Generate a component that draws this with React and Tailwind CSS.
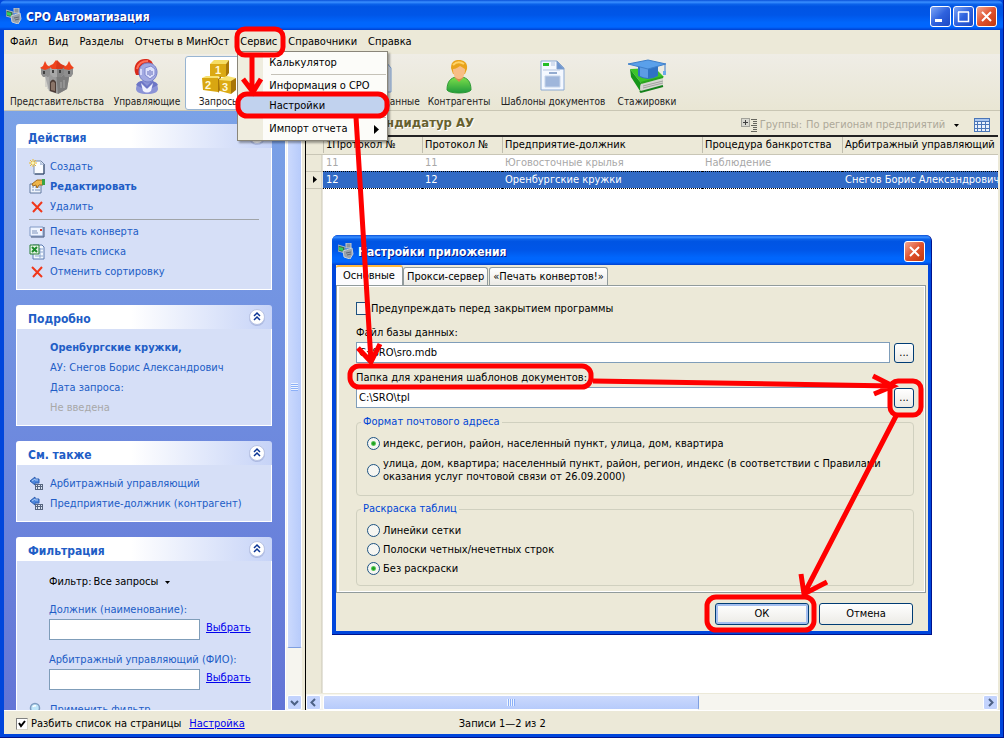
import React, { useState } from 'react';

/* ---------- Icons ---------- */

const AppIcon = () => (
    <svg width="16" height="16" viewBox="0 0 16 16" aria-hidden="true">
        <path d="M0 2l7 2v6L0 8z" fill="#3b6a52" stroke="#aab8c2" strokeWidth="1" />
        <path d="M1 4l4 1v3L1 7z" fill="#2fd05a" />
        <path d="M8 0h5v5H8z" fill="#8a949f" stroke="#c3cad1" strokeWidth="1" />
        <path d="M5 8l9-3 1 6-3 5-6-2z" fill="#9aa2ab" stroke="#c9d0d6" strokeWidth="1" />
        <path d="M8 10l5-1M9 12l4-1" stroke="#5f6872" strokeWidth="1" />
    </svg>
);

const CastleIcon = () => (
    <svg width="36" height="36" viewBox="0 0 36 36" aria-hidden="true">
        <path d="M5 13h26l-3 17-9 5-9-3z" fill="#9b9b9b" />
        <path d="M17 13h14l-3 17-9 5z" fill="#7c7c7c" />
        <path d="M2 9h9v7l-2 2H4l-2-3zM25 9h9v6l-2 3h-6l-1-2z" fill="#8f8f8f" />
        <path d="M11 8h14v7l-3 3h-8l-3-3z" fill="#a8a8a8" />
        <path d="M18 8h7v7l-3 3h-4z" fill="#858585" />
        <path d="M1 9l3-2 2-5 2 4 3 2v1l-5 2zM25 8l3-2 2-4 2 4 3 3-5 2-5-1zM10 7l4-2 3-4 4 4 5 2-3 3H13z" fill="#f0431c" />
        <path d="M18 1l4 4 4 2-3 3h-6z" fill="#d9381a" />
        <path d="M11 23q3-5 6 0v11l-6-2z" fill="#4c3b35" />
        <path d="M12 24q2-3 4 0v8l-4-1z" fill="#8a7468" />
        <path d="M5 12v3M14 11v3M21 11v3M30 12v3" stroke="#404040" strokeWidth="2" />
        <path d="M7 17v11M9 18v12" stroke="#bababa" strokeWidth="1" />
        <path d="M25 21v8M22 23v6" stroke="#a8a8a8" strokeWidth="1" />
    </svg>
);

const KnightIcon = () => (
    <svg width="28" height="36" viewBox="0 0 28 36" aria-hidden="true">
        <path d="M3 16C-1 8 4 0 12 0c5 0 7 2 8 5-7-1-12 2-13 11z" fill="#d92a1b" />
        <path d="M4 10C5 5 9 2 15 2" stroke="#ff6e58" strokeWidth="2" fill="none" />
        <path d="M3 30c0-6 5-9 11-9s11 3 11 9c0 3-4 5-11 5S3 33 3 30z" fill="#8b93d6" />
        <path d="M3 26q2-4 6-4l5 5 5-5q5 1 6 4l-6 3H9z" fill="#6d76c6" />
        <path d="M8 24l6 6 6-6-2 8q-4 3-8 0z" fill="#f1f2ff" />
        <path d="M6 13c0-6 4-9 9-9s9 4 9 9-4 10-9 10-9-4-9-10z" fill="#a2a9e2" stroke="#737dc7" />
        <path d="M12 9l6-2 4 3v6l-5 4-5-4z" fill="#dde0fb" stroke="#8088cd" />
        <path d="M15 12v4M17 11v6M19 12v4" stroke="#6068b8" strokeWidth="1" />
        <path d="M8 10v6" stroke="#d5d8f8" strokeWidth="2" />
    </svg>
);

const BlocksIcon = () => (
    <svg width="36" height="36" viewBox="0 0 36 36" aria-hidden="true">
        <path d="M9 5l4-4h15l-3 4z" fill="#f6dd63" />
        <path d="M9 5h16v13H9z" fill="#dba913" />
        <path d="M25 5l3-4v13l-3 4z" fill="#a87607" />
        <path d="M1 19l4-2h13l-1 3z" fill="#f8e16e" />
        <path d="M1 19h16v14L2 31z" fill="#d8a611" />
        <path d="M17 20l3-3v13l-3 4z" fill="#a87607" />
        <path d="M18 20l8-3 9 2-1 3-14 2z" fill="#f8e16e" />
        <path d="M18 21l12 1v13l-11-3z" fill="#dcaa14" />
        <path d="M30 22l5-3v12l-5 4z" fill="#a87607" />
        <g fill="#fff8d8" fontFamily="Liberation Sans, sans-serif" fontWeight="bold" fontSize="11">
            <text x="14" y="15">1</text>
            <text x="4" y="30">2</text>
            <text x="21" y="32">3</text>
        </g>
    </svg>
);

const DataIcon = () => (
    <svg width="20" height="36" viewBox="0 0 20 36" aria-hidden="true">
        <path d="M1 3h13l5 6v24H1z" fill="#dfe9f8" stroke="#7a9ccb" />
        <path d="M4 11h12M4 16h12M4 21h12" stroke="#90add6" strokeWidth="2" />
    </svg>
);

const PersonIcon = () => (
    <svg width="28" height="36" viewBox="0 0 28 36" aria-hidden="true">
        <defs>
            <linearGradient id="person-body" x1="0" y1="0" x2="0" y2="1">
                <stop offset="0" stopColor="#7fe04a" />
                <stop offset="1" stopColor="#1f9a3c" />
            </linearGradient>
        </defs>
        <path d="M2 31c0-9 4-12 9-13h6c5 1 9 4 9 13-2 4-22 4-24 0z" fill="url(#person-body)" stroke="#2d9a35" />
        <path d="M9 18l5 5 5-5z" fill="#d7894c" />
        <path d="M6 9C6 2 10 1 14 1s9 2 8 9l-2 5H8z" fill="#e9a31c" />
        <path d="M8 10c3 0 5-2 7-3 2 1 3 2 5 3 0 6-2 10-6 10s-6-4-6-10z" fill="#f8bd86" />
        <path d="M8 6q5-5 11-1" stroke="#ffd467" strokeWidth="2" fill="none" />
    </svg>
);

const TemplateIcon = () => (
    <svg width="28" height="36" viewBox="0 0 28 36" aria-hidden="true">
        <path d="M2 2h16l7 7v22H2z" fill="#f4f8ff" stroke="#8ba9d2" />
        <path d="M18 2v8h7z" fill="#6e95cf" stroke="#7f9fcd" />
        <path d="M4 4h6v3H4z" fill="#25bd26" />
        <path d="M12 4h4M12 6h4M4 11h17" stroke="#b3c4df" strokeWidth="1" />
        <path d="M10 14h8" stroke="#93abd0" strokeWidth="2" />
        <path d="M6 17h15v11H6z" fill="#9fb6db" stroke="#c5d4ea" />
    </svg>
);

const CapIcon = () => (
    <svg width="40" height="36" viewBox="0 0 40 36" aria-hidden="true">
        <path d="M3 10l11 14 23-6-9-9z" fill="#3cc528" />
        <path d="M3 10l11 14-1 8L4 18z" fill="#169619" />
        <path d="M14 25l22-6v8l-21 5q-3-3-1-7z" fill="#d6d6d2" />
        <path d="M16 27l20-5M16 29l20-5" stroke="#a2a29e" strokeWidth="1" />
        <path d="M13 32l1 1 22-6" stroke="#14801a" strokeWidth="2" fill="none" />
        <path d="M14 24l22-6" stroke="#2aa41f" strokeWidth="2" />
        <path d="M11 6v11q10 6 20 0V6z" fill="#2f72c4" />
        <path d="M13 8v9q4 2 8 2V8z" fill="#5d9ce4" />
        <path d="M1 5l20-4 18 4-18 5z" fill="#5aa0ea" stroke="#3e7fca" />
        <path d="M38 6v7" stroke="#3e7fca" strokeWidth="1" />
        <path d="M36 12h3v4h-3z" fill="#6ca9ea" />
    </svg>
);

const NewIcon = () => (
    <svg width="16" height="16" viewBox="0 0 16 16" aria-hidden="true">
        <path d="M5 2h7l3 3v10H5z" fill="#fafcff" stroke="#7388ab" />
        <path d="M15 5v10H6" stroke="#2d4263" strokeWidth="1" fill="none" />
        <path d="M11 2v4h4z" fill="#b9c8e0" />
        <path d="M4 0v8M0 4h8M1 1l6 6M7 1L1 7" stroke="#ecb92c" strokeWidth="1" />
        <circle cx="4" cy="4" r="1.5" fill="#fff6b0" />
    </svg>
);

const EditIcon = () => (
    <svg width="16" height="16" viewBox="0 0 16 16" aria-hidden="true">
        <path d="M1 5h11v9H1z" fill="#eef3fb" stroke="#60789f" />
        <path d="M3 8h2M6 8h5M3 11h2M6 11h5" stroke="#7490bb" strokeWidth="1" />
        <path d="M3 5l5-4h6v5h-4L8 9 7 6 4 7z" fill="#eeb54a" stroke="#a36a1d" strokeWidth="1" />
        <path d="M13 0h3v6h-3z" fill="#3aa344" />
    </svg>
);

const DeleteIcon = () => (
    <svg width="16" height="16" viewBox="0 0 16 16" aria-hidden="true">
        <path d="M3 3l10 10M13 3L4 13" stroke="#f0371b" strokeWidth="2" fill="none" />
    </svg>
);

const EnvelopeIcon = () => (
    <svg width="16" height="16" viewBox="0 0 16 16" aria-hidden="true">
        <path d="M1 3h13v9H1z" fill="#eef4ff" stroke="#8098c4" />
        <path d="M15 3v10H2" stroke="#3f5378" strokeWidth="1" fill="none" />
        <path d="M3 7h5M3 9h6" stroke="#7c92bb" strokeWidth="1" />
        <path d="M11 5h2v2h-2z" fill="#d93a22" />
    </svg>
);

const ExcelIcon = () => (
    <svg width="16" height="16" viewBox="0 0 16 16" aria-hidden="true">
        <path d="M4 1h9l2 2v12H4z" fill="#f2f7ff" stroke="#5d7bb0" />
        <path d="M9 5h5M9 8h5M6 12h8M11 4v10" stroke="#8fa8d0" strokeWidth="1" />
        <path d="M1 1h9v9H1z" fill="#eaf6ea" stroke="#277d33" />
        <path d="M3 3l5 5M8 3L3 8" stroke="#1d8b2b" strokeWidth="2" />
    </svg>
);

const LinkArrowIcon = () => (
    <svg width="16" height="16" viewBox="0 0 16 16" aria-hidden="true">
        <path d="M1 5l5-4v2h4v4H6v2z" fill="#4d86da" stroke="#2f5fb1" strokeWidth="1" />
        <path d="M3 5l3-2v1h3" stroke="#a9cbfa" strokeWidth="1" fill="none" />
        <path d="M6 8h8v6H6z" fill="#56657f" />
        <path d="M7 9h1v1H7zM9 9h2v1H9zM12 9h1v1h-1zM7 11h1v2H7zM9 11h2v2H9zM12 11h1v2h-1z" fill="#dfe7f4" />
    </svg>
);

const SearchIcon = () => (
    <svg width="16" height="16" viewBox="0 0 16 16" aria-hidden="true">
        <path d="M9 9l5 5" stroke="#e08a3a" strokeWidth="3" />
        <circle cx="6" cy="6" r="4.5" fill="#bfe6fa" stroke="#7f9cc0" strokeWidth="1.5" />
        <path d="M4 5q1-2 3-1" stroke="#fff" strokeWidth="1.5" fill="none" />
    </svg>
);

const GroupsIcon = () => (
    <svg width="17" height="15" viewBox="0 0 17 15" shapeRendering="crispEdges" aria-hidden="true">
        <path d="M0 0h9v9H0z" fill="#a2a29a" />
        <path d="M1 1h7v7H1z" fill="#d8d8d0" />
        <path d="M2 4h5v1H2zM4 2h1v5H4z" fill="#404040" />
        <path d="M10 1h6v1h-6zM12 3h4v1h-4zM12 5h4v1h-4zM10 7h6v1h-6zM12 9h4v1h-4zM12 11h4v1h-4zM10 13h6v1h-6z" fill="#66665e" />
    </svg>
);

const GridIcon = () => (
    <svg width="16" height="14" viewBox="0 0 16 14" shapeRendering="crispEdges" aria-hidden="true">
        <path d="M0 0h16v14H0z" fill="#4a76b8" />
        <path d="M1 1h14v2H1z" fill="#a9c6ef" />
        <path d="M1 4h2v2H1zM4 4h3v2H4zM8 4h3v2H8zM12 4h3v2h-3zM1 7h2v3H1zM4 7h3v3H4zM8 7h3v3H8zM12 7h3v3h-3zM1 11h2v2H1zM4 11h3v2H4zM8 11h3v2H8zM12 11h3v2h-3z" fill="#e9f1fc" />
    </svg>
);

const Caret = () => (
    <svg width="5" height="3" viewBox="0 0 5 3" aria-hidden="true">
        <path d="M0 0h5L2.5 3z" fill="#000" />
    </svg>
);

const CollapseIcon = () => (
    <svg width="18" height="18" viewBox="0 0 18 18" aria-hidden="true">
        <circle cx="9" cy="10" r="8" fill="#8d9ccb" opacity="0.5" />
        <circle cx="9" cy="9" r="7.5" fill="#fff" stroke="#b9c4e4" />
        <path d="M6 8l3-3 3 3M6 12l3-3 3 3" stroke="#0a3494" strokeWidth="1.5" fill="none" />
    </svg>
);

const Chevron = ({ d }) => (
    <svg width="9" height="9" viewBox="0 0 9 9" aria-hidden="true">
        <path d={d} stroke="#4d6185" strokeWidth="2" fill="none" />
    </svg>
);

/* ---------- Window chrome ---------- */

const captionBase = 'w-[21px] h-[21px] rounded-[3px] border border-white flex items-center justify-center';

const CaptionButton = ({ kind, label }) => (
    <button
        aria-label={label}
        className={
            kind === 'close'
                ? `${captionBase} bg-linear-to-br from-[#f0a58f] via-[#e0512c] to-[#c23708]`
                : `${captionBase} bg-linear-to-br from-[#7fa5f5] via-[#2f62de] to-[#1c49c4]`
        }
    >
        <svg width="13" height="13" viewBox="0 0 13 13" stroke="#fff" fill="none" aria-hidden="true">
            {kind === 'min' && <path d="M1 10.5h7" strokeWidth="3" />}
            {kind === 'max' && <path d="M1.5 2v9.5h10V2M1 2h11" strokeWidth="1.5" />}
            {kind === 'close' && <path d="M2 2l9 9M11 2l-9 9" strokeWidth="2" />}
        </svg>
    </button>
);

const TitleBar = ({ title, children }) => (
    <div className="h-[30px] shrink-0 flex items-center gap-1 pt-0.5 px-1.5 rounded-t-md bg-[linear-gradient(180deg,#0950d8_0%,#3a8fff_7%,#0b62ea_14%,#0054e3_22%,#0056e8_50%,#0066fc_75%,#0066ff_90%,#0040cf_100%)]">
        <AppIcon />
        <h1 className="flex-1 pt-0.5 text-[12px] leading-4 font-bold text-white [text-shadow:1px_1px_0_#0a1883]">{title}</h1>
        <div className="flex gap-0.5">{children}</div>
    </div>
);

/* ---------- Menu ---------- */

const menuItems = ['Файл', 'Вид', 'Разделы', 'Отчеты в МинЮст', 'Сервис', 'Справочники', 'Справка'];

const MenuRow = ({ children, active, arrow }) => (
    <button
        role="menuitem"
        className={`w-full h-5 pl-[30px] pr-[7px] flex items-center justify-between text-left ${active ? 'bg-[#c1d2ee]' : ''}`}
    >
        {children}
        {arrow && (
            <svg width="5" height="9" viewBox="0 0 5 9" aria-hidden="true">
                <path d="M0 0l5 4.5L0 9z" fill="#000" />
            </svg>
        )}
    </button>
);

const ServiceMenu = () => (
    <div
        role="menu"
        className="absolute left-px top-[19px] z-20 w-[151px] p-px border border-[#8a867a] shadow-[2px_2px_2px_rgba(0,0,0,0.35)] bg-[linear-gradient(to_right,#efeddf_25px,#fcfcf9_25px)]"
    >
        <MenuRow>Калькулятор</MenuRow>
        <div className="ml-8 my-px h-px bg-[#c5c2b8]" />
        <MenuRow>Информация о СРО</MenuRow>
        <MenuRow active>Настройки</MenuRow>
        <div className="ml-8 my-px h-px bg-[#c5c2b8]" />
        <MenuRow arrow>Импорт отчета</MenuRow>
    </div>
);

const MenuBar = () => (
    <nav className="h-6 shrink-0 flex items-center pl-0.5 gap-[3px] bg-[#ece9d8]">
        {menuItems.map((item) => (
            <div key={item} className="relative">
                <button className="h-5 px-1 whitespace-nowrap">{item}</button>
                {item === 'Сервис' && <ServiceMenu />}
            </div>
        ))}
    </nav>
);

/* ---------- Toolbar ---------- */

const sections = [
    { name: 'Представительства', icon: CastleIcon, width: 'w-[104px]' },
    { name: 'Управляющие', icon: KnightIcon, width: 'w-[76px]' },
    { name: 'Запросы', icon: BlocksIcon, width: 'w-[68px]', active: true },
    { name: 'Личные данные', icon: DataIcon, width: 'w-[86px] ml-[86px]' },
    { name: 'Контрагенты', icon: PersonIcon, width: 'w-[68px]' },
    { name: 'Шаблоны документов', icon: TemplateIcon, width: 'w-[120px]' },
    { name: 'Стажировки', icon: CapIcon, width: 'w-[68px]' },
];

const Toolbar = () => (
    <div className="h-[57px] shrink-0 flex items-start pt-0.5 pl-px bg-linear-to-b from-[#efede6] to-[#e9e6d4] border-b border-[#c9c6b4]">
        {sections.map(({ name, icon: Icon, width, active }) => (
            <button
                key={name}
                className={`${width} h-[54px] shrink-0 flex flex-col items-center pt-0.5 border rounded-[3px] text-[10px] leading-[14px] text-[#222] whitespace-nowrap ${
                    active ? 'border-[#98b5d2] bg-white' : 'border-transparent'
                }`}
            >
                <Icon />
                <span>{name}</span>
            </button>
        ))}
    </div>
);

/* ---------- Side panel ---------- */

const Card = ({ title, children }) => (
    <section>
        <header className="h-6 pl-3 pr-1.5 flex items-center justify-between rounded-t-[3px] bg-[linear-gradient(to_right,#fff_45%,#c6d3f7)]">
            <h2 className="pt-1 text-[12px] leading-4 font-bold text-[#215dc6]">{title}</h2>
            <button aria-label={`Свернуть: ${title}`}>
                <CollapseIcon />
            </button>
        </header>
        <div className="pt-[9px] pb-[7px] px-3 border border-t-0 border-white bg-[#d6dff7]">{children}</div>
    </section>
);

const TaskLink = ({ icon: Icon, children, bold }) => (
    <a href="#" className={`h-5 flex items-center gap-[5px] whitespace-nowrap text-[#215dc6] ${bold ? 'font-bold' : ''}`}>
        <Icon />
        {children}
    </a>
);

const FilterField = ({ id, label }) => (
    <div className="pl-5">
        <label htmlFor={id} className="h-[19px] flex items-center text-[#215dc6]">{label}</label>
        <div className="flex items-start gap-1.5">
            <input id={id} type="text" className="w-[151px] h-[21px] px-1 border border-[#7f9db9] bg-white" />
            <a href="#" className="pt-px text-[#0000ee] underline">Выбрать</a>
        </div>
    </div>
);

const Sidebar = () => (
    <aside className="w-[281px] shrink-0 overflow-hidden pl-3 pr-[13px] pt-[13px] flex flex-col gap-[15px] bg-linear-to-b from-[#7ba2e7] to-[#6375d6]">
        <Card title="Действия">
            <TaskLink icon={NewIcon}>Создать</TaskLink>
            <TaskLink icon={EditIcon} bold>Редактировать</TaskLink>
            <TaskLink icon={DeleteIcon}>Удалить</TaskLink>
            <hr className="my-0.5 border-[#a0a4a8]" />
            <TaskLink icon={EnvelopeIcon}>Печать конверта</TaskLink>
            <TaskLink icon={ExcelIcon}>Печать списка</TaskLink>
            <TaskLink icon={DeleteIcon}>Отменить сортировку</TaskLink>
        </Card>
        <Card title="Подробно">
            <div className="pl-[21px] leading-5 text-[#215dc6] whitespace-nowrap">
                <p className="font-bold">Оренбургские кружки,</p>
                <p>АУ: Снегов Борис Александрович</p>
                <p>Дата запроса:</p>
                <p className="text-[#a8a8a8]">Не введена</p>
            </div>
        </Card>
        <Card title="См. также">
            <TaskLink icon={LinkArrowIcon}>Арбитражный управляющий</TaskLink>
            <TaskLink icon={LinkArrowIcon}>Предприятие-должник (контрагент)</TaskLink>
        </Card>
        <Card title="Фильтрация">
            <div className="pl-5 pt-0.5 h-[30px] flex items-start">
                <label htmlFor="filter" className="leading-5 pr-0.5">Фильтр:</label>
                <select id="filter" className="h-5 appearance-none bg-transparent">
                    <option>Все запросы</option>
                </select>
                <span className="h-5 pl-1.5 flex items-center"><Caret /></span>
            </div>
            <div className="flex flex-col gap-2.5">
                <FilterField id="debtor" label="Должник (наименование):" />
                <FilterField id="manager" label="Арбитражный управляющий (ФИО):" />
                <TaskLink icon={SearchIcon}>Применить фильтр</TaskLink>
            </div>
        </Card>
    </aside>
);

const scrollButton = 'w-[15px] h-[15px] shrink-0 flex items-center justify-center rounded-[2px] border border-white bg-[#c3d3fd]';

const VerticalScroll = () => (
    <div className="w-[17px] shrink-0 flex flex-col items-center border-l border-white bg-[#f6f5ef]">
        <button aria-label="Вверх" className={scrollButton}><Chevron d="M1 6l3.5-3.5L8 6" /></button>
        <div className="w-[15px] grow-[11] flex items-center justify-center rounded-[2px] border border-white border-b-[#7f9fe0] bg-linear-to-r from-[#cbd9fd] to-[#b7cbfb]">
            <div className="w-[7px] h-2 bg-[repeating-linear-gradient(to_bottom,#eef4fe_0_1px,#8cb0f8_1px_2px)]" />
        </div>
        <div className="grow" />
        <button aria-label="Вниз" className={scrollButton}><Chevron d="M1 3l3.5 3.5L8 3" /></button>
    </div>
);

const HorizontalScroll = () => (
    <div className="h-[17px] shrink-0 flex items-center border-t border-[#ece9d8] bg-[#f6f5ef]">
        <button aria-label="Влево" className={scrollButton}><Chevron d="M6 1L2.5 4.5 6 8" /></button>
        <div className="h-[15px] w-[376px] ml-0.5 flex items-center justify-center rounded-[2px] border border-white border-r-[#7f9fe0] bg-linear-to-b from-[#cbd9fd] to-[#b7cbfb]">
            <div className="w-2 h-[7px] bg-[repeating-linear-gradient(to_right,#eef4fe_0_1px,#8cb0f8_1px_2px)]" />
        </div>
        <div className="grow" />
        <button aria-label="Вправо" className={scrollButton}><Chevron d="M3 1l3.5 3.5L3 8" /></button>
    </div>
);

/* ---------- Records ---------- */

const columns = ['1Протокол №', 'Протокол №', 'Предприятие-должник', 'Процедура банкротства', 'Арбитражный управляющий'];

const rows = [
    { cells: ['11', '11', 'Юговосточные крылья', 'Наблюдение', ''] },
    { cells: ['12', '12', 'Оренбургские кружки', '', 'Снегов Борис Александрович'], selected: true },
];

const Records = () => (
    <main className="flex-1 min-w-0 mr-0.5 flex flex-col border-l border-black">
        <div className="h-6 shrink-0 pl-0.5 pr-2 flex items-center bg-[#ece9d8]">
            <h2 className="flex-1 text-[13px] leading-4 font-bold text-[#66602e] [text-shadow:1px_1px_0_#fff]">Запросы кандидатур АУ</h2>
            <div className="pt-1 flex items-center">
                <GroupsIcon />
                <label htmlFor="groups" className="pl-0.5 pr-1 text-[#aca899]">Группы:</label>
                <select id="groups" disabled className="appearance-none bg-transparent text-[#aca899] opacity-100">
                    <option>По регионам предприятий</option>
                </select>
                <span className="pl-2 pr-[15px]"><Caret /></span>
                <button aria-label="Столбцы"><GridIcon /></button>
            </div>
        </div>
        <div className="flex-1 min-h-0 overflow-hidden border-t-2 border-[#222] bg-[linear-gradient(to_right,#ece9d8_15px,#c9c6b6_16px,#fff_17px)]">
            <table className="w-full table-fixed border-collapse">
                <colgroup>
                    <col className="w-[17px]" />
                    <col className="w-[99px]" />
                    <col className="w-20" />
                    <col className="w-[200px]" />
                    <col className="w-[140px]" />
                    <col />
                </colgroup>
                <thead>
                    <tr className="h-[17px] bg-[#ece9d8] border-b border-[#c9c6b6]">
                        <th aria-label="Текущая запись"></th>
                        {columns.map((name) => (
                            <th key={name} className="p-0 text-left font-normal leading-4 whitespace-nowrap">
                                <span className="block pl-0.5 border-l border-[#c0bdae]">{name}</span>
                            </th>
                        ))}
                    </tr>
                </thead>
                <tbody>
                    {rows.map(({ cells, selected }) => (
                        <tr key={cells[0]} className="h-[17px]">
                            <td className="p-0 border-b border-[#c9c6b6]">
                                {selected && (
                                    <svg width="5" height="7" viewBox="0 0 5 7" className="ml-[7px]" aria-label="Текущая запись">
                                        <path d="M0 0l4 3.5L0 7z" fill="#000" />
                                    </svg>
                                )}
                            </td>
                            {cells.map((cell, i) => (
                                <td
                                    key={i}
                                    className={`p-0 pl-[3px] leading-4 whitespace-nowrap ${
                                        selected ? 'bg-[#316ac5] text-white border-y border-dotted border-black' : 'text-[#a8a8a8]'
                                    }`}
                                >
                                    {cell}
                                </td>
                            ))}
                        </tr>
                    ))}
                </tbody>
            </table>
        </div>
        <HorizontalScroll />
    </main>
);

const StatusBar = () => (
    <footer className="h-6 shrink-0 flex items-center pl-3 pt-[3px] border-t border-white bg-[#ece9d8]">
        <label className="flex items-center gap-[3px]">
            <span className="relative w-3 h-3">
                <input type="checkbox" defaultChecked className="peer block w-3 h-3 appearance-none bg-white border border-[#808080] border-r-[#d8d5c8] border-b-[#d8d5c8]" />
                <svg className="absolute left-0 top-0 hidden peer-checked:block pointer-events-none" width="12" height="12" viewBox="0 0 12 12" aria-hidden="true">
                    <path d="M3 5l2 3 4-5" stroke="#000" strokeWidth="2" fill="none" />
                </svg>
            </span>
            Разбить список на страницы
        </label>
        <a href="#" className="ml-2 text-[#0000ee] underline">Настройка</a>
        <span className="ml-[214px]">Записи 1—2 из 2</span>
    </footer>
);

/* ---------- Settings dialog ---------- */

const tabs = ['Основные', 'Прокси-сервер', '«Печать конвертов!»'];

const PathField = ({ id, label, value }) => (
    <div>
        <label htmlFor={id} className="block leading-[19px]">{label}</label>
        <div className="flex items-center gap-1">
            <input id={id} type="text" defaultValue={value} className="flex-1 min-w-0 h-[21px] px-0.5 border border-[#7f9db9] bg-white" />
            <button aria-label="Обзор" className="w-5 h-5 rounded-[3px] border border-[#003c74] bg-linear-to-b from-white to-[#ecebe6] leading-4">...</button>
        </div>
    </div>
);

const Radio = ({ name, value, selected, onChange, children }) => (
    <label className="flex items-center gap-[3px] leading-[13px]">
        <input
            type="radio"
            name={name}
            checked={selected === value}
            onChange={() => onChange(value)}
            className="w-[13px] h-[13px] shrink-0 appearance-none rounded-full border border-[#1d5281] bg-[#f6f6f2] checked:bg-[radial-gradient(circle,#21a121_0_1px,#5cc75c_2px,#f6f6f2_3px)]"
        />
        <span>{children}</span>
    </label>
);

const group = 'rounded border border-[#d0d0bf] pl-2.5';

const SettingsDialog = () => {
    const [format, setFormat] = useState('index');
    const [paint, setPaint] = useState('none');

    return (
        <div
            role="dialog"
            aria-label="Настройки приложения"
            className="absolute left-[332px] top-[235px] z-10 w-[600px] rounded-t-md bg-[#0046dc] border-r border-b border-[#00138c]"
        >
            <TitleBar title="Настройки приложения">
                <CaptionButton kind="close" label="Закрыть" />
            </TitleBar>
            <div className="ml-1 mr-[3px] mb-[3px] bg-[#ece9d8]">
                <div role="tablist" className="h-5 flex items-end">
                    {tabs.map((tab, i) => (
                        <button
                            key={tab}
                            role="tab"
                            aria-selected={i === 0}
                            className={
                                i === 0
                                    ? 'h-5 px-[7px] border-t-2 border-[#ffb83c] border-r border-r-[#919b9c] rounded-t-[3px] bg-[#fcfcfe]'
                                    : 'h-[18px] px-[3px] mr-px border border-b-0 border-[#919b9c] rounded-t-[3px] bg-linear-to-b from-white to-[#ecebe6]'
                            }
                        >
                            {tab}
                        </button>
                    ))}
                </div>
                <div className="mr-0.5 pl-[19px] pr-[11px] pt-4 pb-1.5 border border-[#919b9c] shadow-[inset_2px_0_0_#fff,inset_-1px_-1px_0_#fff,inset_0_1px_0_#fff]">
                    <label className="flex items-center gap-0.5 h-[13px]">
                        <input type="checkbox" className="w-[13px] h-[13px] appearance-none border border-[#1d5281] bg-[#f4f4f0] checked:bg-[#21a121]" />
                        Предупреждать перед закрытием программы
                    </label>
                    <div className="pt-2 flex flex-col gap-[5px]">
                        <PathField id="db" label="Файл базы данных:" value="C:\SRO\sro.mdb" />
                        <PathField id="tpl" label="Папка для хранения шаблонов документов:" value="C:\SRO\tpl" />
                    </div>
                    <fieldset className={`${group} mt-[7px] pb-3`}>
                        <legend className="-ml-1.5 px-0.5 leading-[14px] text-[#0046d5]">Формат почтового адреса</legend>
                        <div className="pt-2 flex flex-col gap-[7px]">
                            <Radio name="format" value="index" selected={format} onChange={setFormat}>
                                индекс, регион, район, населенный пункт, улица, дом, квартира
                            </Radio>
                            <Radio name="format" value="street" selected={format} onChange={setFormat}>
                                улица, дом, квартира; населенный пункт, район, регион, индекс (в соответствии с Правилами
                                <br />
                                оказания услуг почтовой связи от 26.09.2000)
                            </Radio>
                        </div>
                    </fieldset>
                    <fieldset className={`${group} mt-1.5 pb-2.5`}>
                        <legend className="-ml-1.5 px-0.5 leading-[14px] text-[#0046d5]">Раскраска таблиц</legend>
                        <div className="pt-2 flex flex-col gap-1.5">
                            <Radio name="paint" value="grid" selected={paint} onChange={setPaint}>Линейки сетки</Radio>
                            <Radio name="paint" value="stripes" selected={paint} onChange={setPaint}>Полоски четных/нечетных строк</Radio>
                            <Radio name="paint" value="none" selected={paint} onChange={setPaint}>Без раскраски</Radio>
                        </div>
                    </fieldset>
                </div>
                <div className="pt-2.5 pb-1.5 pr-[15px] flex justify-end gap-2.5">
                    <button className="w-[94px] h-[22px] rounded-[3px] border border-[#003c74] bg-linear-to-b from-white to-[#ecebe6] shadow-[inset_0_0_0_2px_#a5bff0]">ОК</button>
                    <button className="w-[94px] h-[22px] rounded-[3px] border border-[#003c74] bg-linear-to-b from-white to-[#ecebe6]">Отмена</button>
                </div>
            </div>
        </div>
    );
};

/* Red route: menu -> settings -> folder -> browse -> OK */
const Route = () => (
    <svg
        className="absolute left-0 top-0 z-30 pointer-events-none"
        width="1004"
        height="738"
        viewBox="0 0 1004 738"
        fill="none"
        stroke="#f00"
        strokeWidth="5"
        aria-hidden="true"
    >
        <rect x="237" y="29" width="46" height="26" rx="8" />
        <path d="M252 56v36M243 79l10 13 8-13" />
        <rect x="238" y="94" width="149" height="22" rx="9" />
        <path d="M356 117l15 244M358 348l13 14 9-18" />
        <rect x="350" y="366" width="241" height="21" rx="9" />
        <path d="M593 381l300 5M873 376l20 10-19 8" />
        <rect x="890" y="381" width="31" height="34" rx="8" />
        <path d="M896 416l-92 178M801 574l3 20 23-12" />
        <rect x="707" y="597" width="107" height="33" rx="9" />
    </svg>
);

const App = () => (
    <div className="relative h-screen min-w-[960px] flex flex-col overflow-hidden bg-[#0046dc] border-r border-b border-[#00138c] text-[11px] leading-4 text-black font-['DejaVu_Sans_Condensed','DejaVu_Sans',sans-serif]">
        <TitleBar title="СРО Автоматизация">
            <CaptionButton kind="min" label="Свернуть" />
            <CaptionButton kind="max" label="Развернуть" />
            <CaptionButton kind="close" label="Закрыть" />
        </TitleBar>
        <div className="flex-1 min-h-0 ml-1 mr-[3px] mb-[3px] flex flex-col bg-[#ece9d8]">
            <MenuBar />
            <Toolbar />
            <div className="flex-1 min-h-0 flex">
                <Sidebar />
                <VerticalScroll />
                <div className="w-[3px] shrink-0" />
                <Records />
            </div>
            <StatusBar />
        </div>
        <SettingsDialog />
        <Route />
    </div>
);

export default App;
